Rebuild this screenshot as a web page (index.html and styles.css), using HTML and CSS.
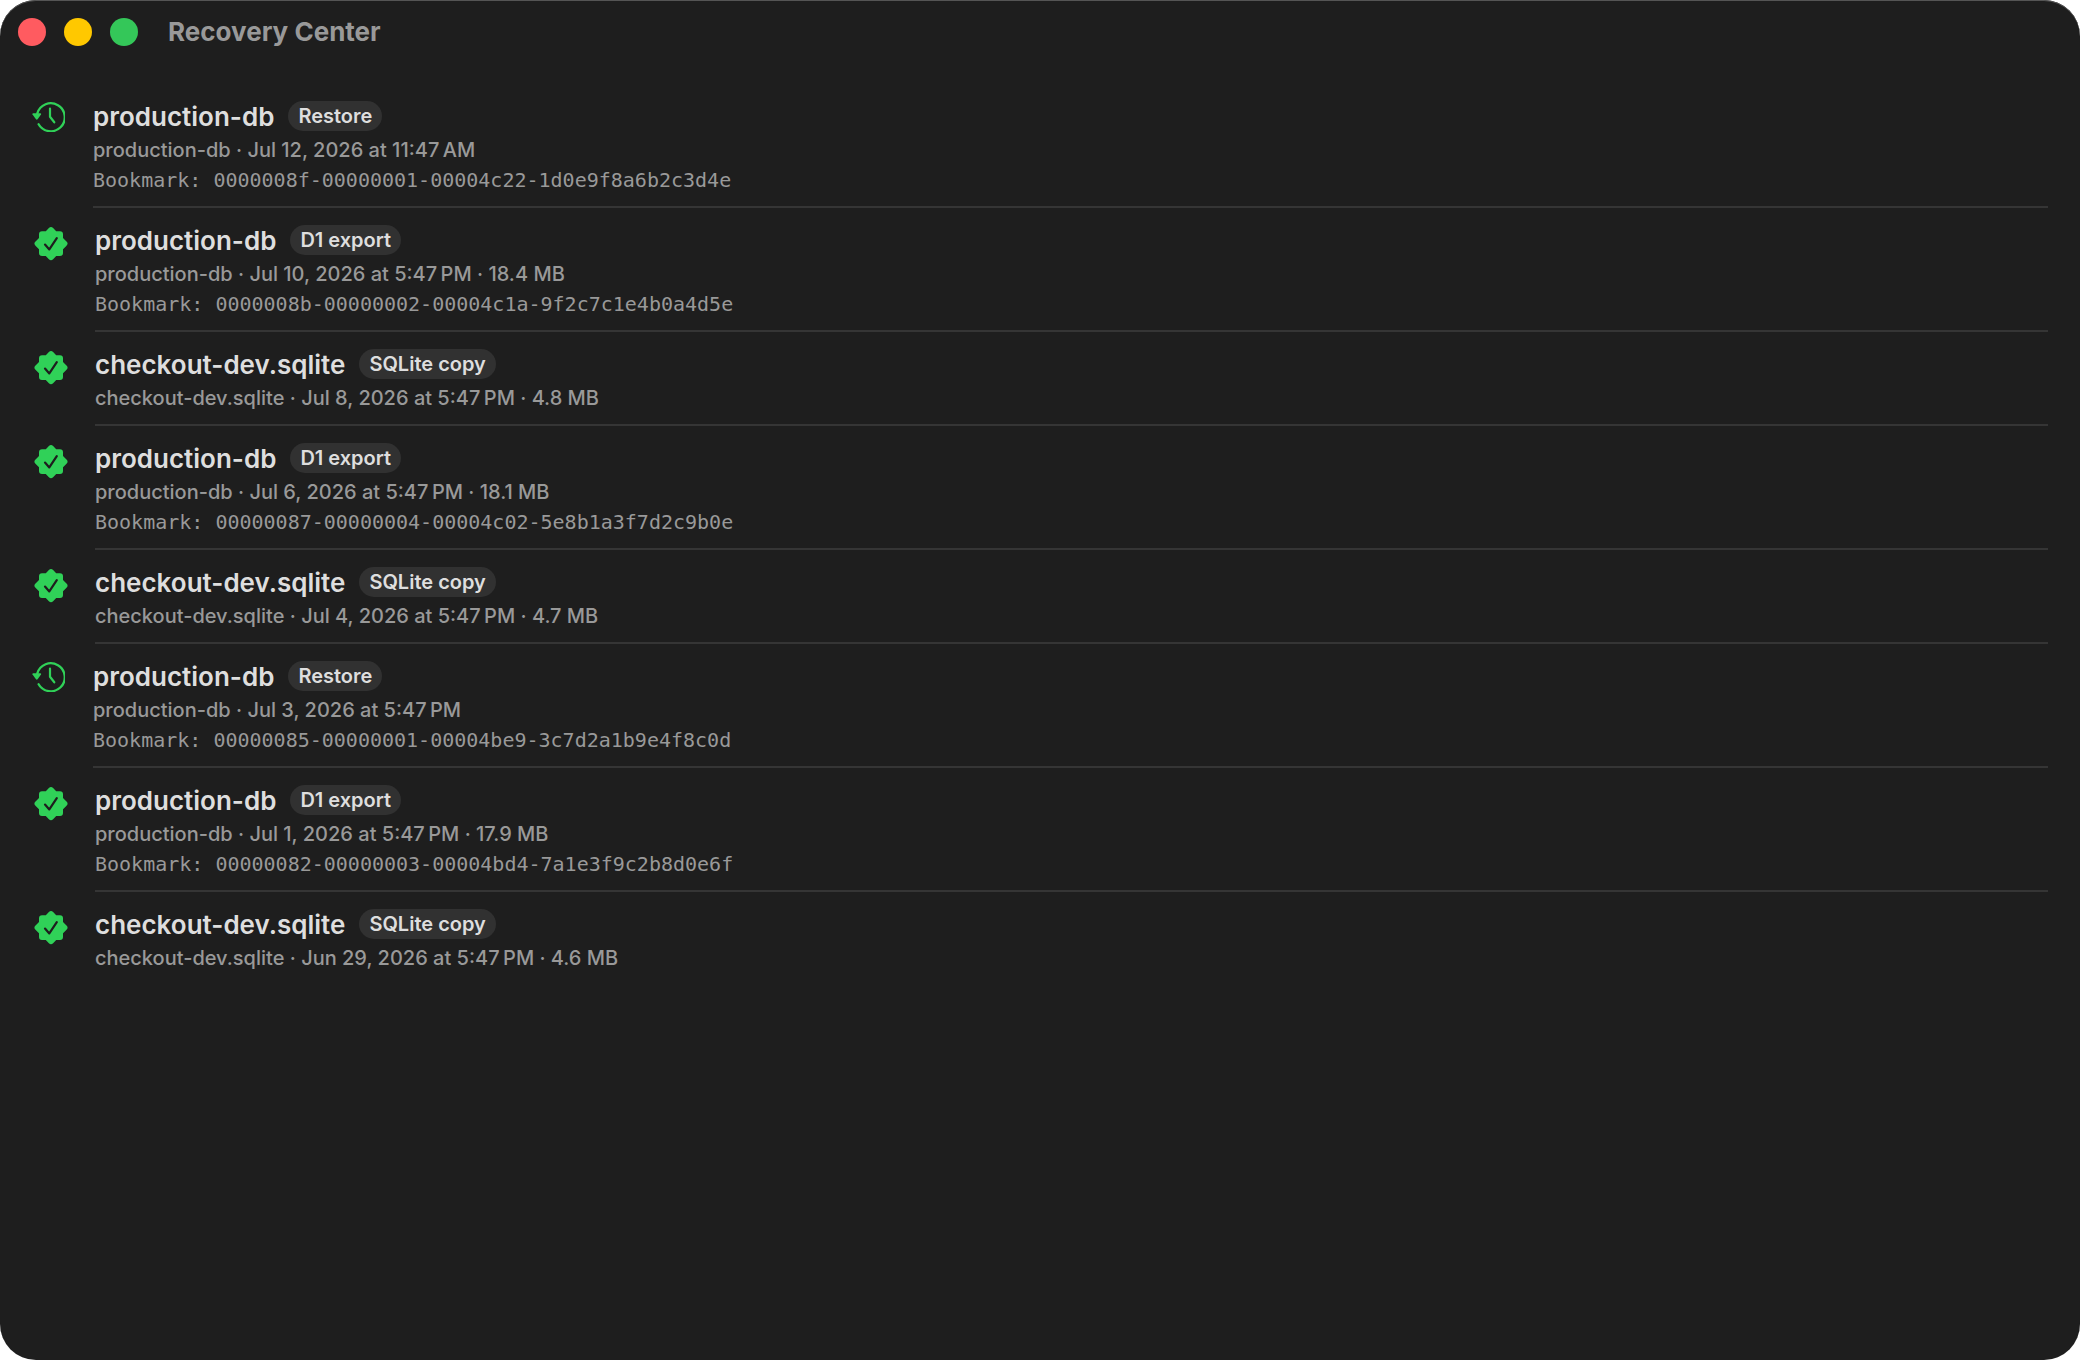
FILE: index.html
```html
<!DOCTYPE html>
<html lang="en">
<head>
  <meta charset="UTF-8" />
  <title>Recovery Center</title>
  <meta name="viewport" content="width=device-width, initial-scale=1.0">
  <link rel="stylesheet" href="styles.css">
</head>
<body>
  <!-- Shared icons -->
  <svg class="sprite" aria-hidden="true">
    <symbol id="icon-restore" viewBox="0 0 33 32">
      <path d="M5.3 13.4 A14 14 0 1 1 6.6 24.2" fill="none" stroke="currentColor" stroke-width="2.3" stroke-linecap="round" />
      <path d="M1.1 13.2 H8.4 Q9.6 13.4 9 14.5 L5.6 19.3 Q4.8 20.2 4 19.3 L0.5 14.5 Q0 13.4 1.1 13.2 Z" fill="currentColor" />
      <path d="M18 8.6 V16.8 L22.3 22.3" fill="none" stroke="currentColor" stroke-width="2.2" stroke-linecap="round" stroke-linejoin="round" />
    </symbol>
    <symbol id="icon-seal" viewBox="0 0 35 34" overflow="visible">
      <path d="M16.9 1 Q19 -1 21.1 1 L24.2 4.2 H28 Q31 4.2 31 7.2 V11 L34.5 14.4 Q36.7 16.6 34.5 18.8 L31 22.2 V26 Q31 29 28 29 H24.2 L21.1 32.2 Q19 34.2 16.9 32.2 L13.8 29 H10 Q7 29 7 26 V22.2 L3.5 18.8 Q1.3 16.6 3.5 14.4 L7 11 V7.2 Q7 4.2 10 4.2 H13.8 Z" fill="currentColor" />
      <path class="tick" d="M13 17.6 L17.3 22.4 L24.8 11.2" fill="none" stroke-width="2.2" stroke-linecap="round" stroke-linejoin="round" />
    </symbol>
  </svg>

  <div class="window">
    <header class="titlebar">
      <div class="lights">
        <button class="light close" type="button" aria-label="Close"></button>
        <button class="light minimize" type="button" aria-label="Minimize"></button>
        <button class="light zoom" type="button" aria-label="Zoom"></button>
      </div>
      <h1>Recovery Center</h1>
    </header>

    <ul class="list">
      <li class="row">
        <svg class="icon restore" aria-hidden="true"><use href="#icon-restore" /></svg>
        <div class="info">
          <div class="name"><h2>production-db</h2><span class="badge">Restore</span></div>
          <p>production-db · Jul 12, 2026 at 11:47&#8239;AM</p>
          <p class="bookmark">Bookmark: 0000008f-00000001-00004c22-1d0e9f8a6b2c3d4e</p>
        </div>
      </li>
      <li class="row">
        <svg class="icon seal" aria-hidden="true"><use href="#icon-seal" /></svg>
        <div class="info">
          <div class="name"><h2>production-db</h2><span class="badge">D1 export</span></div>
          <p>production-db · Jul 10, 2026 at 5:47&#8239;PM · 18.4 MB</p>
          <p class="bookmark">Bookmark: 0000008b-00000002-00004c1a-9f2c7c1e4b0a4d5e</p>
        </div>
      </li>
      <li class="row">
        <svg class="icon seal" aria-hidden="true"><use href="#icon-seal" /></svg>
        <div class="info">
          <div class="name"><h2>checkout-dev.sqlite</h2><span class="badge">SQLite copy</span></div>
          <p>checkout-dev.sqlite · Jul 8, 2026 at 5:47&#8239;PM · 4.8 MB</p>
        </div>
      </li>
      <li class="row">
        <svg class="icon seal" aria-hidden="true"><use href="#icon-seal" /></svg>
        <div class="info">
          <div class="name"><h2>production-db</h2><span class="badge">D1 export</span></div>
          <p>production-db · Jul 6, 2026 at 5:47&#8239;PM · 18.1 MB</p>
          <p class="bookmark">Bookmark: 00000087-00000004-00004c02-5e8b1a3f7d2c9b0e</p>
        </div>
      </li>
      <li class="row">
        <svg class="icon seal" aria-hidden="true"><use href="#icon-seal" /></svg>
        <div class="info">
          <div class="name"><h2>checkout-dev.sqlite</h2><span class="badge">SQLite copy</span></div>
          <p>checkout-dev.sqlite · Jul 4, 2026 at 5:47&#8239;PM · 4.7 MB</p>
        </div>
      </li>
      <li class="row">
        <svg class="icon restore" aria-hidden="true"><use href="#icon-restore" /></svg>
        <div class="info">
          <div class="name"><h2>production-db</h2><span class="badge">Restore</span></div>
          <p>production-db · Jul 3, 2026 at 5:47&#8239;PM</p>
          <p class="bookmark">Bookmark: 00000085-00000001-00004be9-3c7d2a1b9e4f8c0d</p>
        </div>
      </li>
      <li class="row">
        <svg class="icon seal" aria-hidden="true"><use href="#icon-seal" /></svg>
        <div class="info">
          <div class="name"><h2>production-db</h2><span class="badge">D1 export</span></div>
          <p>production-db · Jul 1, 2026 at 5:47&#8239;PM · 17.9 MB</p>
          <p class="bookmark">Bookmark: 00000082-00000003-00004bd4-7a1e3f9c2b8d0e6f</p>
        </div>
      </li>
      <li class="row">
        <svg class="icon seal" aria-hidden="true"><use href="#icon-seal" /></svg>
        <div class="info">
          <div class="name"><h2>checkout-dev.sqlite</h2><span class="badge">SQLite copy</span></div>
          <p>checkout-dev.sqlite · Jun 29, 2026 at 5:47&#8239;PM · 4.6 MB</p>
        </div>
      </li>
    </ul>
  </div>
</body>
</html>
```
FILE: styles.css
```css
* {
  box-sizing: border-box;
}

body {
  margin: 0;
  background: white;
  color: #dedede;
  font-family: Inter, "Liberation Sans", sans-serif;
  font-size: 20px;
}

h1, h2, p, ul {
  margin: 0;
  padding: 0;
}

.sprite {
  display: none;
}

.window {
  min-height: 100vh;
  background: #1e1e1e;
  border-radius: 36px;
  box-shadow: inset 0 1px 0 #555;
}

/* Title bar */
.titlebar {
  display: flex;
  align-items: center;
  gap: 30px;
  height: 64px;
  padding: 0 18px;
}

.titlebar h1 {
  color: #999;
  font-size: 26px;
  font-weight: 700;
  line-height: 32px;
}

.lights {
  display: flex;
  gap: 18px;
}

.light {
  width: 28px;
  height: 28px;
  padding: 0;
  border: none;
  border-radius: 50%;
}

.close {
  background: #ff5b60;
}

.minimize {
  background: #ffc800;
}

.zoom {
  background: #34c759;
}

/* Recovery points */
.list {
  padding: 20px 32px;
  list-style: none;
}

.row {
  display: flex;
  gap: 28px;
}

.icon {
  flex: none;
  overflow: visible;
  color: #30d158;
}

.restore {
  width: 33px;
  height: 32px;
  margin-top: 16px;
}

.seal {
  width: 35px;
  height: 34px;
  margin-top: 19px;
}

.tick {
  stroke: #1e1e1e;
}

.info {
  display: flex;
  flex: 1;
  flex-direction: column;
  gap: 4px;
  padding: 17px 0 13px;
  border-bottom: 2px solid #353535;
}

.row:last-child .info {
  border-bottom: none;
}

.name {
  display: flex;
  align-items: flex-start;
  gap: 14px;
}

.name h2 {
  font-size: 26px;
  font-weight: 600;
  line-height: 32px;
}

.badge {
  padding: 0 10px;
  border-radius: 15px;
  background: #313131;
  font-weight: 600;
  line-height: 30px;
}

.info p {
  color: #999;
  font-weight: 500;
  line-height: 26px;
}

.info .bookmark {
  font-family: "DejaVu Sans Mono", monospace;
}
```
